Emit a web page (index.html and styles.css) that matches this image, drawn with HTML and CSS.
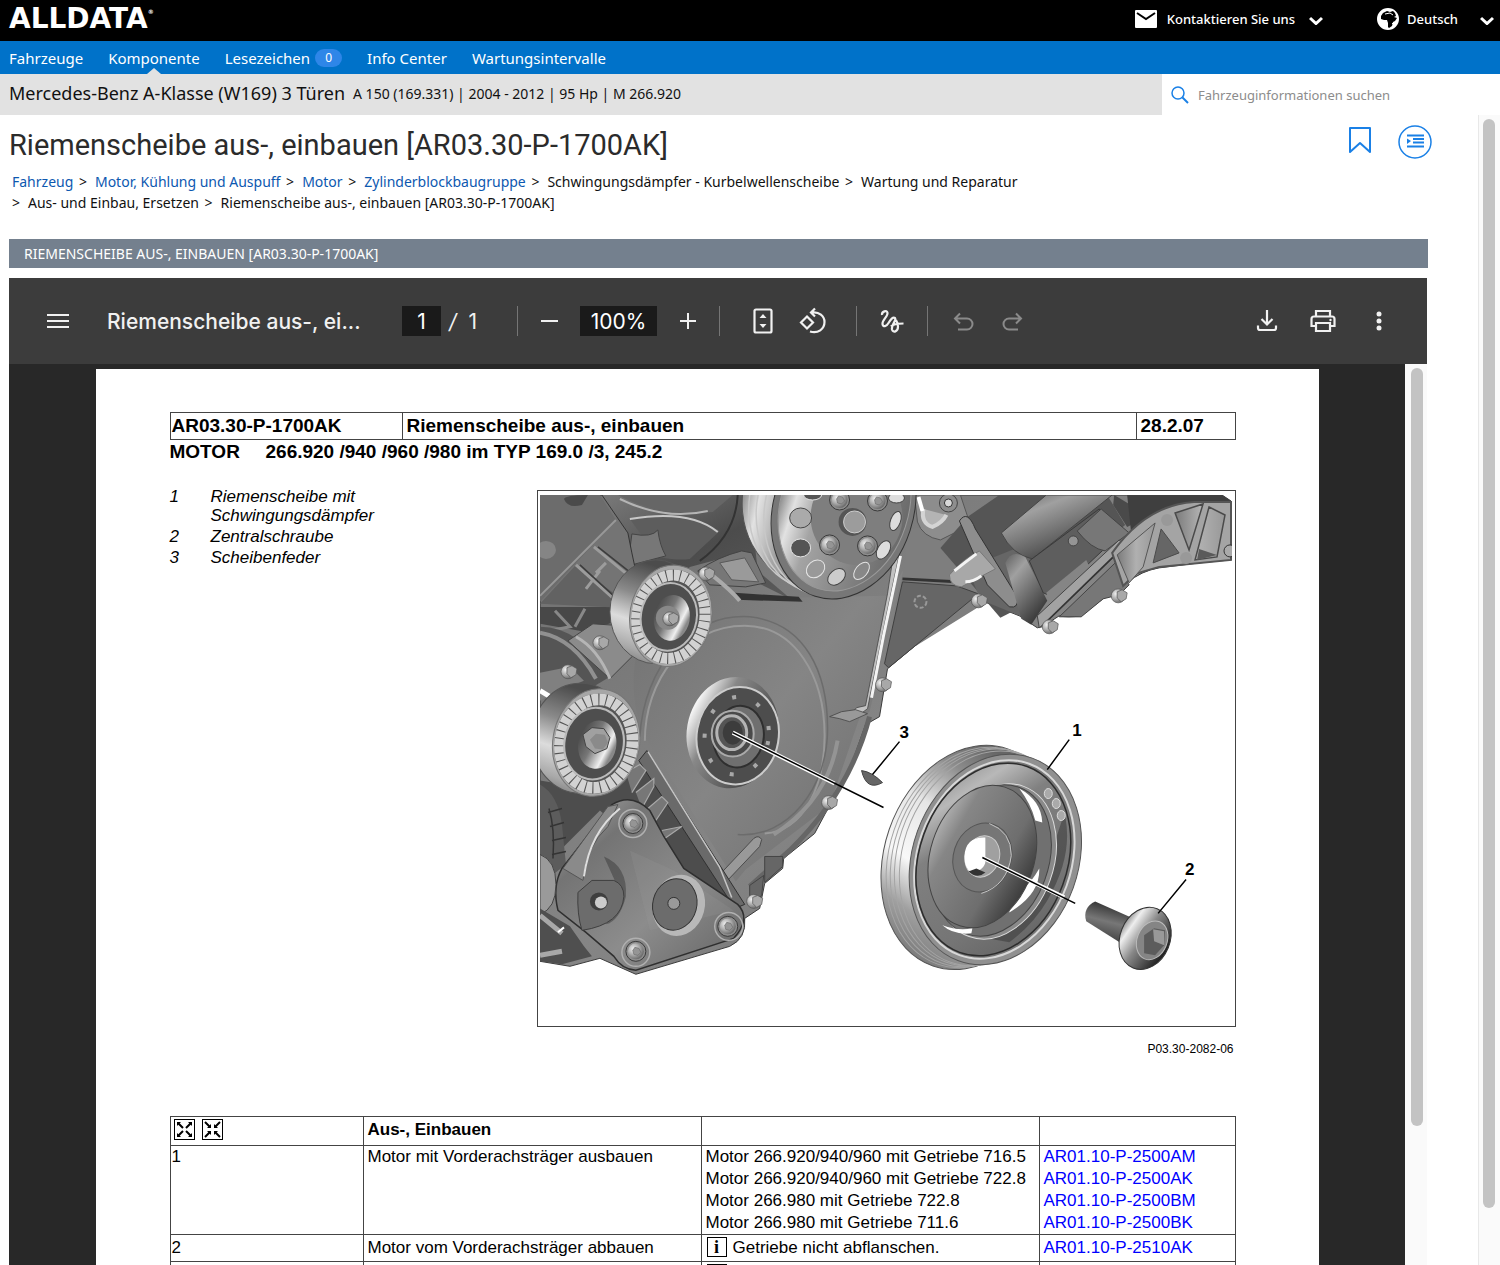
FILE: index.html
```
<!DOCTYPE html>
<html lang="de">
<head>
<meta charset="utf-8">
<title>ALLDATA - Riemenscheibe aus-, einbauen</title>
<link rel="stylesheet" href="styles.css">
</head>

<body>

<header class="topbar">
	<a class="logo" href="#">ALLDATA<sup>&reg;</sup></a>
	<button class="top-btn contact" type="button">
		<svg width="22" height="18" viewBox="0 0 22 18"><rect x="0" y="0" width="22" height="18" rx="1" fill="#fff"/><path d="M2 3l9 6 9-6" fill="none" stroke="#000" stroke-width="2"/></svg>
		Kontaktieren Sie uns
		<svg class="chev" width="14" height="9" viewBox="0 0 14 9"><path d="M1 2q6 5.500 6 5.500t6-5.500" fill="none" stroke="#fff" stroke-width="3"/></svg>
	</button>
	<button class="top-btn lang" type="button">
		<svg width="22" height="22" viewBox="0 0 22 22"><circle cx="11" cy="11" r="10" fill="#fff" stroke="#fff" stroke-width="2"/><path d="M4 8l2-3 4-2 3 1 3-1 2 2 1 3-2 1 3 1-2 3-2 1-1 4-3 2-1-1 0-4-1-3-3 0-3-1z" fill="#000"/><path d="M8 6l5-1 3 2M15 16l1-1" stroke="#fff" fill="none"/></svg>
		Deutsch
		<svg class="chev" width="14" height="9" viewBox="0 0 14 9"><path d="M1 2q6 5.500 6 5.500t6-5.500" fill="none" stroke="#fff" stroke-width="3"/></svg>
	</button>
</header>

<nav class="mainnav">
	<a href="#">Fahrzeuge</a>
	<a href="#" class="active">Komponente</a>
	<a href="#">Lesezeichen<span class="badge">0</span></a>
	<a href="#">Info Center</a>
	<a href="#">Wartungsintervalle</a>
</nav>

<div class="vehicle">
	<div class="vehicle-info">
		<strong>Mercedes-Benz A-Klasse (W169) 3 Türen</strong>
		<span>A 150 (169.331) | 2004 - 2012 | 95 Hp | M 266.920</span>
	</div>
	<form class="search">
		<label for="q"><svg width="18" height="18" viewBox="0 0 18 18"><circle cx="7" cy="7" r="6" fill="none" stroke="#1a80e6" stroke-width="1.500"/><path d="M11.500 11.500l5.500 5.500" stroke="#1a80e6" stroke-width="2"/></svg></label>
		<input id="q" type="text" placeholder="Fahrzeuginformationen suchen">
	</form>
</div>

<div class="content">
<main>
	<div class="title-row">
		<h1>Riemenscheibe aus-, einbauen [AR03.30-P-1700AK]</h1>
		<button class="icon-btn" type="button" aria-label="Lesezeichen">
			<svg width="24" height="32" viewBox="0 0 24 32"><path d="M2 2h20v24l-10-9-10 9z" fill="none" stroke="#1a80e6" stroke-width="2" stroke-linejoin="round"/></svg>
		</button>
		<button class="icon-btn" type="button" aria-label="Inhalt">
			<svg width="34" height="34" viewBox="0 0 34 34"><circle cx="17" cy="17" r="16" fill="none" stroke="#1a80e6" stroke-width="1.500"/><path d="M9 10.500h17M15 14h11M15 17.500h11M9 21.500h17" stroke="#1a80e6" stroke-width="2"/><path d="M9 13.500l4 2.500-4 3z" fill="#1a80e6"/></svg>
		</button>
	</div>

	<ol class="crumbs">
		<li><a href="#">Fahrzeug</a></li>
		<li><a href="#">Motor, Kühlung und Auspuff</a></li>
		<li><a href="#">Motor</a></li>
		<li><a href="#">Zylinderblockbaugruppe</a></li>
		<li>Schwingungsdämpfer - Kurbelwellenscheibe</li>
		<li>Wartung und Reparatur</li>
		<li>Aus- und Einbau, Ersetzen</li>
		<li>Riemenscheibe aus-, einbauen [AR03.30-P-1700AK]</li>
	</ol>

	<h2>RIEMENSCHEIBE AUS-, EINBAUEN [AR03.30-P-1700AK]</h2>

	<section class="viewer">
		<div class="toolbar">
			<button class="tool" type="button" aria-label="Menü"><svg width="28" height="28" viewBox="0 0 28 28"><path d="M3 8h22M3 14h22M3 20h22" stroke="#f1f1f1" stroke-width="2"/></svg></button>
			<span class="doc-name">Riemenscheibe aus-, ei...</span>
			<input class="page-no" type="text" value="1" aria-label="Seite">
			<span class="page-total"><i>/</i>1</span>
			<span class="divider"></span>
			<div class="zoom">
				<button class="tool" type="button" aria-label="Verkleinern"><svg width="28" height="28" viewBox="0 0 28 28"><path d="M6 14h17" stroke="#f1f1f1" stroke-width="2"/></svg></button>
				<input type="text" value="100%" aria-label="Zoom">
				<button class="tool" type="button" aria-label="Vergrößern"><svg width="28" height="28" viewBox="0 0 28 28"><path d="M6 14h16M14 6v16" stroke="#f1f1f1" stroke-width="2"/></svg></button>
			</div>
			<span class="divider"></span>
			<div class="view">
				<button class="tool" type="button" aria-label="An Seite anpassen"><svg width="28" height="28" viewBox="0 0 28 28"><rect x="5.500" y="2.500" width="17" height="23" rx="1.500" fill="none" stroke="#f1f1f1" stroke-width="2.200"/><path d="M10.500 11l3.500-4 3.500 4zM10.500 17l3.500 4 3.500-4z" fill="#f1f1f1"/></svg></button>
				<button class="tool" type="button" aria-label="Drehen"><svg width="28" height="28" viewBox="0 0 28 28"><path d="M8 9.500l6 6-6 6-6-6zM13 5.500c7-1 12.500 3.500 12.500 9.500 0 7-6.500 12-14.500 9.500M16 1.500l-4 4 4 4" fill="none" stroke="#f1f1f1" stroke-width="2.200"/></svg></button>
			</div>
			<span class="divider"></span>
			<button class="tool ink" type="button" aria-label="Zeichnen"><svg width="28" height="28" viewBox="0 0 28 28"><path d="M4 8C3.500 4.500 9 2.500 9.500 6 10 9.500 4 13 4.500 17c.5 3.500 4 2.500 6-1s4.500-6.500 6.500-5c2 2-4 7-3 11.500 1 3.500 6 2.500 6-3 0-2.500-.8-4.500-2-6.500M13 19.500C15 16.800 19 16.500 25.500 16.500" fill="none" stroke="#f1f1f1" stroke-width="2.200"/></svg></button>
			<span class="divider"></span>
			<div class="history">
				<button class="tool" type="button" aria-label="Rückgängig" disabled><svg width="28" height="28" viewBox="0 0 28 28"><path d="M11 6.500l-5 5 5 5M6 11.500h12a5 5 0 0 1 0 11H9" fill="none" stroke="#8a8a8a" stroke-width="2"/></svg></button>
				<button class="tool" type="button" aria-label="Wiederholen" disabled><svg width="28" height="28" viewBox="0 0 28 28"><path d="M17 6.500l5 5-5 5M22 11.500H10a5 5 0 0 0 0 11H19" fill="none" stroke="#8a8a8a" stroke-width="2"/></svg></button>
			</div>
			<div class="actions">
				<button class="tool" type="button" aria-label="Herunterladen"><svg width="28" height="28" viewBox="0 0 28 28"><path d="M14 3v14M8.500 12l5.500 5.500 5.500-5.500M5 18.500V21q0 2 2 2h14q2 0 2-2v-2.500" fill="none" stroke="#f1f1f1" stroke-width="2.200"/></svg></button>
				<button class="tool" type="button" aria-label="Drucken"><svg width="28" height="28" viewBox="0 0 28 28"><path d="M7 9V4h14v5M7 19H2.500v-7q0-2.500 2.500-2.500h18q2.500 0 2.500 2.500v7H21M7 16h14v8H7z" fill="none" stroke="#f1f1f1" stroke-width="2.200"/><circle cx="21.500" cy="13" r="1.200" fill="#f1f1f1"/></svg></button>
				<button class="tool" type="button" aria-label="Mehr"><svg width="28" height="28" viewBox="0 0 28 28"><g fill="#f1f1f1"><circle cx="14" cy="7" r="2.500"/><circle cx="14" cy="14" r="2.500"/><circle cx="14" cy="21" r="2.500"/></g></svg></button>
			</div>
		</div>

		<div class="pages">
			<article class="paper">
				<table class="doc-head">
					<tr><td>AR03.30-P-1700AK</td><td>Riemenscheibe aus-, einbauen</td><td>28.2.07</td></tr>
				</table>
				<p class="motor"><b>MOTOR</b><b>266.920 /940 /960 /980 im TYP 169.0 /3, 245.2</b></p>

				<div class="figure-row">
					<dl class="legend">
						<dt>1</dt><dd>Riemenscheibe mit Schwingungsdämpfer</dd>
						<dt>2</dt><dd>Zentralschraube</dd>
						<dt>3</dt><dd>Scheibenfeder</dd>
					</dl>
					<figure>
<svg class="drawing" viewBox="538 490 698 536">
	<defs>
		<linearGradient id="plate" x1="0" y1="0" x2="1" y2="1"><stop offset="0" stop-color="#6f6f6f"/><stop offset=".5" stop-color="#858585"/><stop offset="1" stop-color="#6a6a6a"/></linearGradient>
		<linearGradient id="dark" x1="0" y1="0" x2="1" y2="1"><stop offset="0" stop-color="#7a7a7a"/><stop offset=".5" stop-color="#4c4c4c"/><stop offset="1" stop-color="#5c5c5c"/></linearGradient>
		<linearGradient id="rim" x1="0" y1="0" x2="1" y2="0"><stop offset="0" stop-color="#8c8c8c"/><stop offset=".12" stop-color="#e2e2e2"/><stop offset=".3" stop-color="#a4a4a4"/><stop offset="1" stop-color="#6a6a6a"/></linearGradient>
		<linearGradient id="drum" x1=".3" y1="0" x2="0" y2="1"><stop offset="0" stop-color="#4c4c4c"/><stop offset=".3" stop-color="#8a8a8a"/><stop offset=".55" stop-color="#dcdcdc"/><stop offset=".8" stop-color="#a8a8a8"/><stop offset="1" stop-color="#6a6a6a"/></linearGradient>
		<linearGradient id="belt" x1=".3" y1="0" x2=".1" y2="1"><stop offset="0" stop-color="#666"/><stop offset=".15" stop-color="#8c8c8c"/><stop offset=".35" stop-color="#e6e6e6"/><stop offset=".6" stop-color="#f8f8f8"/><stop offset=".78" stop-color="#a0a0a0"/><stop offset="1" stop-color="#6c6c6c"/></linearGradient>
		<linearGradient id="face" x1="0" y1="0" x2="1" y2="1"><stop offset="0" stop-color="#7a7a7a"/><stop offset=".2" stop-color="#b8b8b8"/><stop offset=".35" stop-color="#808080"/><stop offset=".7" stop-color="#757575"/><stop offset="1" stop-color="#5c5c5c"/></linearGradient>
		<linearGradient id="dish" x1="0" y1=".3" x2="1" y2=".6"><stop offset="0" stop-color="#b4b4b4"/><stop offset=".2" stop-color="#868686"/><stop offset=".7" stop-color="#6e6e6e"/><stop offset="1" stop-color="#3c3c3c"/></linearGradient>
		<linearGradient id="tube" x1="0" y1="0" x2=".7" y2="1"><stop offset="0" stop-color="#606060"/><stop offset=".3" stop-color="#a0a0a0"/><stop offset=".65" stop-color="#6a6a6a"/><stop offset="1" stop-color="#333"/></linearGradient>
		<linearGradient id="shaft" x1=".3" y1="0" x2="0" y2="1"><stop offset="0" stop-color="#333"/><stop offset=".4" stop-color="#777"/><stop offset="1" stop-color="#2c2c2c"/></linearGradient>
		<linearGradient id="arm" x1="0" y1="0" x2="1" y2="0"><stop offset="0" stop-color="#7b7b7b"/><stop offset=".5" stop-color="#b0b0b0"/><stop offset="1" stop-color="#989898"/></linearGradient>
		<linearGradient id="hubring" x1="0" y1="0" x2="1" y2=".4"><stop offset="0" stop-color="#9a9a9a"/><stop offset=".15" stop-color="#f4f4f4"/><stop offset=".4" stop-color="#888"/><stop offset="1" stop-color="#444"/></linearGradient>
		<linearGradient id="cup" x1="0" y1="0" x2="1" y2=".4"><stop offset="0" stop-color="#3c3c3c"/><stop offset=".5" stop-color="#777"/><stop offset=".85" stop-color="#f0f0f0"/><stop offset="1" stop-color="#888"/></linearGradient>
		<linearGradient id="tri" x1="0" y1="0" x2="1" y2="1"><stop offset="0" stop-color="#b4b4b4"/><stop offset=".25" stop-color="#747474"/><stop offset=".6" stop-color="#8c8c8c"/><stop offset="1" stop-color="#636363"/></linearGradient>
		<radialGradient id="bolt" cx=".35" cy=".35" r=".7"><stop offset="0" stop-color="#f2f2f2"/><stop offset=".5" stop-color="#b0b0b0"/><stop offset="1" stop-color="#666"/></radialGradient>
		<linearGradient id="head" x1="0" y1=".2" x2="1" y2=".5"><stop offset="0" stop-color="#777"/><stop offset=".2" stop-color="#eee"/><stop offset=".5" stop-color="#888"/><stop offset="1" stop-color="#222"/></linearGradient>
		<clipPath id="frame"><rect x="540" y="494" width="693" height="529"/></clipPath>
		<g id="screw"><circle r="10" fill="#8d8d8d" stroke="#3a3a3a"/><circle r="8" fill="url(#bolt)"/><path d="M-1-4l4 1 2 4-3 3-4-1-1-4z" fill="#959595" stroke="#666" stroke-width=".6"/></g>
		<g id="hexbolt"><circle r="7" fill="url(#bolt)" stroke="#555" stroke-width=".7"/><path d="M-1-4l5-2 5 3-1 6-5 3-4-4z" fill="#a8a8a8" stroke="#555" stroke-width=".7"/></g>
	</defs>
	<g clip-path="url(#frame)">
		<!-- engine block -->
		<path d="M540 494H1223l9 6v59l-32 3-40 5q-18 3-32 15l-6 11-17 4-23 18q-14 2-22 0l-17 11-5 1-18-12-35-14-20 10-10 8h-8l-59 49-8 48-14 8-16 45-12 20-8 16-15 28-31 25-1 10-18 15-5 25-15 10q2 20-15 28l-94 28-36-16-30 8L540 961z" fill="url(#plate)" stroke="#3a3a3a"/>
		<!-- upper left housing -->
		<path d="M600 494h150l8 76 40 34H690l-50-20z" fill="url(#dark)"/>
		<path d="M618 494q40 22 95 17l20-17z" fill="#666"/><path d="M620 498q45 22 88 12" fill="none" stroke="#b5b5b5" stroke-width="2"/>
		<path d="M630 518q60-8 90 12l-30 28q-12 2-30-2l-20-24z" fill="#5d5d5d"/>
		<path d="M630 518q60-10 88 13" fill="none" stroke="#c8c8c8" stroke-width="2"/>
		<path d="M632 533q20 4 26-4 2 16 8 26l-38 10z" fill="#777" stroke="#444"/>
		<path d="M738 494q-2 40-38 66" fill="none" stroke="#333" stroke-width="2"/>
		<!-- left bracket -->
		<path d="M540 494h62l26 38 4 20 6 28-18 27h-80z" fill="#747474" stroke="#343434"/>
		<path d="M540 494h60l16 25-76 82z" fill="#6c6c6c"/>
		<path d="M616 519l-76 76" stroke="#989898" stroke-width="2"/>
		<path d="M540 603l35-38 40 28 4 14z" fill="#626262"/>
		<path d="M594 546l34 28M576 564l38 34M600 570l-14 18M606 562l-10 10" stroke="#9c9c9c" stroke-width="3"/>
		<path d="M598 546l33 26M580 564l36 33" stroke="#3d3d3d" stroke-width="1.500"/>
		<path d="M564 498q2-4 24-4l-6 10q-14 4-18-6z" fill="#4a4a4a"/><ellipse cx="546" cy="549" rx="10" ry="9" fill="#858585"/>
		<path d="M540 607h85l-10 14-30 10-45-8z" fill="#484848"/>
		<path d="M555 610l15 16-20 4M585 608l-10 18" stroke="#888" stroke-width="3" fill="none"/>
		<path d="M540 626q40 0 70 50l-20 12-50-14z" fill="#555"/><path d="M540 632q34 6 56 46" fill="none" stroke="#909090" stroke-width="4"/>
		<path d="M540 672l30-6 14 14-34 14-10 6z" fill="#808080"/><path d="M540 690l10 6" stroke="#fff" stroke-width="5"/>
		<path d="M568 640l25-17 30 2 15 25-28 28z" fill="#8b8b8b" stroke="#444"/>
		<path d="M576 636q22 12 34 42" fill="none" stroke="#b5b5b5" stroke-width="3"/>
		<use href="#hexbolt" x="600" y="642"/><use href="#hexbolt" x="568" y="671"/>
		<!-- dark zone under the lower idler -->
		<path d="M540 780l60 10 50-30 92 150-62-30-80-70-40 40-20-10z" fill="#4d4d4d"/>
		<path d="M540 784q18 10 22 40l4 40-26 20z" fill="#5c5c5c"/><path d="M548 812l14-4M550 826l14-4M552 840l14-3M552 854l14-3M549 808q6 20 4 50" fill="none" stroke="#343434" stroke-width="1.500"/>
		<!-- timing cover -->
		<path d="M690 566l56-15 14 32 28 14 100-2 16-26-34 142-10 6-30 88-84 64-10 12-94-150q-20-60 8-116z" fill="url(#plate)"/>
		<path d="M698 570q20-14 44-20l10 2 14 30-20 4-36-2z" fill="#777" stroke="#444"/><path d="M720 562l25-5 14 24-27-2z" fill="#9a9a9a" stroke="#5a5a5a"/>
		<path d="M735 592l64 4 4 5-66-2z" fill="#333"/><path d="M712 574q20 16 28 26" stroke="#aaa" stroke-width="4" fill="none"/>
		<use href="#hexbolt" x="706" y="573"/>
		<path d="M645 740c0-60 40-115 100-115 50 0 80 50 80 110 0 50-20 95-60 98" fill="none" stroke="#999" stroke-width="2"/>
		<path d="M640 736c4-70 50-124 110-120 56 6 78 56 78 112 0 60-40 110-90 106" fill="none" stroke="#6c6c6c" stroke-width="1.500"/>
		<path d="M838 740q-10 60-64 94" fill="none" stroke="#949494" stroke-width="4"/>
		<path d="M870 716q-20 76-80 134l-40 36" fill="none" stroke="#666" stroke-width="5"/>
		<path d="M722 872l32-34q5-4 8 1l-2 7-36 38z" fill="#999" stroke="#4b4b4b"/>
		<path d="M647 750l98 154-10 4-96-148z" fill="#6a6a6a" stroke="#303030"/><path d="M648 751l72 116 12 30" fill="none" stroke="#c4c4c4" stroke-width="1.500"/>
		<path d="M626 772l14-8 6 6-14 22M636 792l18-14 0 8-12 22M648 808l14-12 6 6-12 18M662 830l20-4-20 14" fill="#777" stroke="#a8a8a8" stroke-width="1.200"/>
		<!-- bright edge rib -->
		<path d="M906 524l-19 90-19 94-8 6-8-1 5-6 9-2 22-112 10-66z" fill="#c2c2c2" stroke="#444" stroke-width=".8"/><path d="M901 555l-17 80-12 62" stroke="#f4f4f4" stroke-width="3" fill="none"/>
		<path d="M830 716l12-5 14-2 12 4-18 8-10-3z" fill="#999" stroke="#444" stroke-width=".8"/>
		<!-- right upper housings -->
		<path d="M906 530l60-16 30 66-10 22-100 62 20-104z" fill="#7e7e7e"/>
		<path d="M903 581l54 4 22 8-90 74-4-4z" fill="#666" stroke="#3f3f3f"/><path d="M903 578l54 3" stroke="#333" stroke-width="3"/>
		<circle cx="921" cy="601" r="6" fill="none" stroke="#999" stroke-width="2" stroke-dasharray="4 2"/>
		<path d="M915 494h46l10 30-30 15q-18-3-23-18z" fill="#8d8d8d" stroke="#555"/><path d="M924 508q-3 14 9 18 10-4 14-12" fill="#b4b4b4" stroke="#d4d4d4" stroke-width="4"/><path d="M919 496l4 14" stroke="#fff" stroke-width="4"/>
		<circle cx="949" cy="502" r="9" fill="#8e8e8e" stroke="#444"/><circle cx="949" cy="502" r="4" fill="#d8d8d8" stroke="#333"/>
		<path d="M968 516l32-22h108l18 30-90 75-35 18-60-70z" fill="#555"/>
		<path d="M985 560l50-20 30 30-42 46-42-17-8-20z" fill="#666"/>
		<path d="M960 520q8-12 16 8l42 68q2 12-8 10l-22-22z" fill="#8d8d8d" stroke="#333"/>
		<path d="M950 574q14-16 30-24l16 18-34 18q-12-1-12-12z" fill="#a8a8a8" stroke="#777"/><path d="M955 570q10-8 22-17M966 581q8 0 16-6" fill="none" stroke="#f4f4f4" stroke-width="3"/>
		<path d="M1002 532l45-38h66l-80 64q-20-4-31-26z" fill="url(#tube)" stroke="#444"/>
		<path d="M1006 562q6-14 20-6l22 44-16 24-10-6z" fill="url(#tube)"/>
		<path d="M1030 560l70-52 20 26-66 62-10-4z" fill="#5e5e5e" stroke="#3a3a3a"/>
		<path d="M1047 592l40-33 4 8-40 36z" fill="#858585"/>
		<path d="M1078 530l24-22 28 24-24 18q-14-2-28-20z" fill="#777" stroke="#444"/><circle cx="1074" cy="540" r="5" fill="#949494" stroke="#444"/>
		<path d="M1038 615l82-76 6 6-72 70-14 12z" fill="#a2a2a2" stroke="#444"/>
		<path d="M1060 616l56-54 14 22-10 10-16 4-22 18z" fill="#777" stroke="#444"/><path d="M1044 624l70-68" stroke="#333" stroke-width="1.500"/>
		<path d="M1115 494l20 12 5 14-12 6-14-22z" fill="#4a4a4a"/><path d="M1131 502l8 5" stroke="#fff" stroke-width="5" stroke-dasharray="2 1"/>
		<!-- arm -->
		<path d="M1128 494h95l9 6v12l-70 0-30 20z" fill="#3f3f3f"/>
		<path d="M1113 552q34-48 82-51l37 0v58l-72 7-24 7-12 12z" fill="#a4a4a4" stroke="#555" stroke-width="2"/>
		<path d="M1118 554l38-32-12 44-14 16z" fill="url(#arm)" stroke="#555"/>
		<path d="M1176 512l28-9-14 46zM1210 506l16 8-8 42-22 3z" fill="url(#arm)" stroke="#4a4a4a" stroke-width="1.500"/>
		<path d="M1162 528l18 24-26 10z" fill="#666" stroke="#4a4a4a"/><path d="M1200 548l18 6-20 5z" fill="#5a5a5a"/>
		<circle cx="1168" cy="519" r="6" fill="#999"/><circle cx="1187" cy="557" r="6" fill="#999"/><circle cx="1231" cy="550" r="6" fill="#aaa" stroke="#333"/>
		<use href="#hexbolt" x="1119" y="595"/><use href="#hexbolt" x="1050" y="626"/><use href="#hexbolt" x="979" y="600"/><use href="#hexbolt" x="883" y="684"/><use href="#hexbolt" x="829" y="802"/>
		<path d="M765 856l18 0 0 10-18 16zM750 885l14-10-2 20-12 10z" fill="#666" stroke="#444"/><use href="#hexbolt" x="754" y="901"/>
		<!-- top pulley -->
		<ellipse cx="820" cy="498" rx="77" ry="86" transform="rotate(14 820 498)" fill="url(#rim)" stroke="#555"/>
		<g fill="none" stroke="#c8c8c8" stroke-width="1.500"><ellipse cx="826" cy="502" rx="76" ry="88" transform="rotate(16 826 502)"/><ellipse cx="832" cy="504" rx="74" ry="90" transform="rotate(16 832 504)"/><ellipse cx="838" cy="506" rx="72" ry="91" transform="rotate(16 838 506)"/></g>
		<ellipse cx="844" cy="508" rx="70" ry="92" transform="rotate(18 844 508)" fill="#777" stroke="#333"/>
		<ellipse cx="845" cy="506" rx="64" ry="86" transform="rotate(18 845 506)" fill="url(#rim)" stroke="#999"/>
		<ellipse cx="857" cy="516" rx="46" ry="48" fill="#7e7e7e"/>
		<g fill="#555" stroke="#e4e4e4"><ellipse cx="801" cy="517" rx="11" ry="10" fill="#aaa" stroke="#444"/><ellipse cx="801" cy="547" rx="10" ry="9"/><ellipse cx="816" cy="568" rx="10" ry="8" transform="rotate(-40 816 568)" fill="#999"/><ellipse cx="837" cy="576" rx="10" ry="7" transform="rotate(-40 837 576)" fill="#ccc" stroke="#444"/><ellipse cx="862" cy="570" rx="10" ry="6" transform="rotate(-50 862 570)" fill="#888"/><ellipse cx="884" cy="549" rx="10" ry="6" transform="rotate(-60 884 549)" fill="#ddd" stroke="#444"/><ellipse cx="896" cy="520" rx="10" ry="5" transform="rotate(-70 896 520)" fill="#ddd" stroke="#444"/><ellipse cx="813" cy="494" rx="9" ry="5"/><ellipse cx="897" cy="497" rx="8" ry="5" fill="#ddd" stroke="#444"/></g>
		<circle cx="853" cy="521" r="14" fill="#555"/><circle cx="855" cy="521" r="11" fill="#9c9c9c" stroke="#ccc"/>
		<use href="#screw" x="830" y="544"/><use href="#screw" x="868" y="545"/><use href="#screw" x="840" y="499"/><use href="#screw" x="878" y="500"/>
		<!-- crank hub -->
		<ellipse cx="733" cy="732" rx="46" ry="56" transform="rotate(10 733 732)" fill="url(#hubring)"/>
		<ellipse cx="738" cy="735" rx="41" ry="49" transform="rotate(10 738 735)" fill="#4d4d4d" stroke="#ccc" stroke-width="2"/>
		<ellipse cx="737" cy="735" rx="32" ry="39" transform="rotate(10 737 735)" fill="none" stroke="#a8a8a8" stroke-width="4" stroke-dasharray="4 22"/>
		<ellipse cx="739" cy="736" rx="25" ry="31" transform="rotate(10 739 736)" fill="#6f6f6f" stroke="#2f2f2f" stroke-width="2"/>
		<ellipse cx="733" cy="733" rx="21" ry="23" fill="#4a4a4a" stroke="#aaa" stroke-width="2"/>
		<ellipse cx="732" cy="732" rx="15" ry="17" fill="#555" stroke="#b4b4b4" stroke-width="3"/>
		<ellipse cx="733" cy="732" rx="10" ry="12" fill="#3c3c3c"/>
		<!-- idlers -->
		<g id="idler">
			<ellipse cx="656" cy="611" rx="46" ry="52" fill="url(#drum)" stroke="#555"/>
			<ellipse cx="671" cy="615" rx="41" ry="51" transform="rotate(10 671 615)" fill="#a6a6a6" stroke="#777"/>
			<ellipse cx="671" cy="616" rx="34" ry="42" transform="rotate(10 671 616)" fill="#555" stroke="#555" stroke-width="11"/>
			<ellipse cx="671" cy="616" rx="34" ry="42" transform="rotate(10 671 616)" fill="none" stroke="#d2d2d2" stroke-width="11" stroke-dasharray="6 1"/>
			<ellipse cx="669" cy="616" rx="28" ry="34" transform="rotate(10 669 616)" fill="#4e4e4e" stroke="#bbb" stroke-width="2"/>
			<ellipse cx="672" cy="617" rx="18" ry="23" transform="rotate(10 672 617)" fill="url(#cup)"/>
		</g>
		<circle cx="668" cy="617" r="12" fill="#888"/><use href="#hexbolt" x="670" y="618"/>
		<g transform="translate(-115 90) scale(1.060)"><use href="#idler"/></g>
		<path d="M583 734l9-7 12 1 6 9-3 11-12 5-9-7z" fill="#a0a0a0" stroke="#444"/><path d="M590 739l6-6 9 1 3 8-5 7-8-1z" fill="#8a8a8a"/>
		<!-- lower bracket -->
		<path d="M612 804q20-12 38 6l14 26 20 32 54 36q14 14-4 34l-98 32q-14-1-22-14l-28-24-28-22q-6-24 4-42z" fill="url(#tri)" stroke="#2f2f2f" stroke-width="1.500"/>
		<path d="M608 806l10-2-10 22q-22 20-25 54l-20-12z" fill="#8a8a8a" stroke="#555"/><path d="M620 808q-30 24-36 68" fill="none" stroke="#ddd" stroke-width="2"/>
		<path d="M604 856q24 10 22 40-6 24-20 28 16-30 8-46z" fill="#3a3a3a" opacity=".5"/><path d="M630 850l20 80 84-20-60-40z" fill="#999" opacity=".2"/>
		<path d="M578 892l14-12h22q10 4 10 16-2 28-42 34-5-16-4-38z" fill="#6c6c6c" stroke="#3f3f3f"/><circle cx="599" cy="901" r="9" fill="#3f3f3f"/><circle cx="601" cy="902" r="6" fill="#ccc"/>
		<ellipse cx="679" cy="905" rx="26" ry="31" transform="rotate(15 679 905)" fill="#b8b8b8"/><ellipse cx="675" cy="904" rx="22" ry="26" transform="rotate(15 675 904)" fill="#6c6c6c" stroke="#333"/><circle cx="674" cy="903" r="6" fill="#999" stroke="#333"/>
		<g fill="none" stroke="#b0b0b0" stroke-width="1.500"><circle cx="633" cy="823" r="14"/><circle cx="729" cy="926" r="14"/><circle cx="636" cy="952" r="14"/></g>
		<use href="#screw" x="633" y="823"/><use href="#screw" x="728" y="926"/><use href="#screw" x="636" y="951"/>
		<path d="M540 854q16 6 16 30t-16 30z" fill="#9a9a9a" stroke="#444"/>
		<path d="M540 908l30 18 14 20 8 10-30 8-22-3z" fill="#4f4f4f"/><path d="M540 955l22-4M540 915l22 18" stroke="#a8a8a8" stroke-width="5"/><path d="M558 932l6-5" stroke="#fff" stroke-width="2"/>
	</g>

	<!-- key -->
	<path d="M862 770q10 1 21 12-16 9-21-12z" fill="#666" stroke="#444"/>

	<!-- damper pulley (1) -->
	<ellipse cx="971" cy="857" rx="86" ry="115" transform="rotate(19 971 857)" fill="url(#belt)" stroke="#555"/>
	<g fill="none" stroke="#a4a4a4"><ellipse cx="975" cy="857" rx="85" ry="113" transform="rotate(19 975 857)"/><ellipse cx="979" cy="857" rx="85" ry="112" transform="rotate(19 979 857)"/><ellipse cx="983" cy="857" rx="85" ry="111" transform="rotate(19 983 857)"/><ellipse cx="987" cy="858" rx="84" ry="110" transform="rotate(19 987 858)"/></g>
	<ellipse cx="996" cy="859" rx="83" ry="108" transform="rotate(20 996 859)" fill="#909090" stroke="#555"/>
	<ellipse cx="995" cy="859" rx="77" ry="102" transform="rotate(20 995 859)" fill="#777" stroke="#d8d8d8" stroke-width="2"/>
	<ellipse cx="994" cy="859" rx="74" ry="99" transform="rotate(20 994 859)" fill="url(#face)" stroke="#2d2d2d" stroke-width="1.500"/>
	<path d="M1066 816q8 40-18 84-14 24-38 42l-22-4 56-62 20-60z" fill="#3d3d3d" opacity=".6"/>
	<ellipse cx="997" cy="861" rx="57" ry="80" transform="rotate(20 997 861)" fill="#8a8a8a" stroke="#ddd"/>
	<ellipse cx="993" cy="860" rx="56" ry="78" transform="rotate(20 993 860)" fill="#707070" stroke="#444"/>
	<path d="M1020 788q22 12 23 34l-7-2q-4-16-16-32zM1040 868q1 26-30 44 1-14 14-24 8-6 16-20zM943 925q16 6 30 3l-1 5q-18 2-29-8z" fill="#fff"/>
	<ellipse cx="983" cy="856" rx="52" ry="73" transform="rotate(18 983 856)" fill="url(#dish)" stroke="#444"/>
	<ellipse cx="983" cy="857" rx="29" ry="35" transform="rotate(18 983 857)" fill="#767676" stroke="#555"/><path d="M990 823q22 8 22 32-4 30-30 38" fill="none" stroke="#c4c4c4"/>
	<ellipse cx="983" cy="856" rx="17" ry="21" transform="rotate(18 983 856)" fill="#a0a0a0" stroke="#ccc"/>
	<path d="M986 837q-20-1-21 19 0 12 7 16 16-2 14-16z" fill="#fff"/><path d="M969 871q9 8 17 1l-9-4z" fill="#333"/>
	<g fill="#aaa" stroke="#ddd"><ellipse cx="1049" cy="793" rx="4" ry="5"/><ellipse cx="1057" cy="803" rx="4" ry="5"/><ellipse cx="1062" cy="815" rx="4" ry="5"/></g>

	<!-- centre bolt (2) -->
	<path d="M1087 921q-4-14 9-20l40 18-14 24z" fill="url(#shaft)"/>
	<ellipse cx="1146" cy="938" rx="25" ry="32" transform="rotate(22 1146 938)" fill="url(#head)" stroke="#333"/>
	<ellipse cx="1153" cy="940" rx="15" ry="20" transform="rotate(22 1153 940)" fill="#858585" stroke="#bbb"/>
	<path d="M1145 935l10-7 11 2-1 15-9 10-11-2z" fill="#5c5c5c"/><path d="M1154 929l11 2v14l-10-4z" fill="#999"/>

	<!-- leader lines -->
	<path d="M733 732l102 51M983 857l82 40" stroke="#fff" stroke-width="4"/>
	<path d="M733 732l151 75M983 857l93 46M900 741l-27 33M1070 739l-22 30M1187 879l-28 34" stroke="#000" stroke-width="1.500" fill="none"/>
	<g class="callout"><text x="900" y="737">3</text><text x="1073" y="735">1</text><text x="1186" y="875">2</text></g>
</svg>
						<figcaption>P03.30-2082-06</figcaption>
					</figure>
				</div>

				<table class="steps">
					<colgroup><col class="c1"><col class="c2"><col class="c2"><col class="c4"></colgroup>
					<tr class="head">
						<th>
							<svg width="21" height="21" viewBox="0 0 21 21"><rect x=".5" y=".5" width="20" height="20" fill="#fff" stroke="#000"/><path d="M9 9L4 4M12 9l5-5M9 12l-5 5M12 12l5 5" stroke="#000" stroke-width="2"/><path d="M3 3h4L3 7zM18 3v4l-4-4zM3 18v-4l4 4zM18 18h-4l4-4z"/></svg>
							<svg width="21" height="21" viewBox="0 0 21 21"><rect x=".5" y=".5" width="20" height="20" fill="#fff" stroke="#000"/><path d="M3 3l5 5M18 3l-5 5M3 18l5-5M18 18l-5-5" stroke="#000" stroke-width="2"/><path d="M9 9H5l4-4zM12 9V5l4 4zM9 12v4l-4-4zM12 12h4l-4 4z"/></svg>
						</th>
						<th>Aus-, Einbauen</th><th></th><th></th>
					</tr>
					<tr><td rowspan="4">1</td><td rowspan="4">Motor mit Vorderachsträger ausbauen</td><td>Motor 266.920/940/960 mit Getriebe 716.5</td><td><a href="#">AR01.10-P-2500AM</a></td></tr>
					<tr class="sub"><td>Motor 266.920/940/960 mit Getriebe 722.8</td><td><a href="#">AR01.10-P-2500AK</a></td></tr>
					<tr class="sub"><td>Motor 266.980 mit Getriebe 722.8</td><td><a href="#">AR01.10-P-2500BM</a></td></tr>
					<tr class="sub"><td>Motor 266.980 mit Getriebe 711.6</td><td><a href="#">AR01.10-P-2500BK</a></td></tr>
					<tr class="note"><td>2</td><td>Motor vom Vorderachsträger abbauen</td><td><span class="info">i</span>Getriebe nicht abflanschen.</td><td><a href="#">AR01.10-P-2510AK</a></td></tr>
					<tr class="note"><td></td><td></td><td><span class="info"></span></td><td></td></tr>
				</table>
			</article>
			<div class="scroll"><div class="thumb pdf-thumb"></div></div>
		</div>
	</section>
</main>
<div class="scroll page-scroll"><div class="thumb"></div></div>
</div>

</body>
</html>
```
FILE: styles.css
```
*{
	margin:0;
	padding:0;
	box-sizing:border-box;
}
body{
	display:flex;
	flex-direction:column;
	height:100vh;
	overflow:hidden;
	background:#fff;
	color:#111;
	font-family:"Noto Sans","Open Sans",sans-serif;
	font-size:14px;
}
button{
	border:0;
	background:none;
	font:inherit;
	color:inherit;
}
input{
	border:0;
	font:inherit;
}
a{
	text-decoration:none;
}
svg{
	display:block;
}

/* top bar */
.topbar{
	display:flex;
	flex:none;
	height:41px;
	padding:0 6px 0 9px;
	background:#000;
	color:#fff;
}
.logo{
	margin-right:auto;
	font:bold 28px/38px "DejaVu Sans",sans-serif;
	color:#fff;
}
.logo sup{
	font-size:6px;
	line-height:6px;
	vertical-align:14px;
}
.top-btn{
	display:flex;
	align-items:center;
	height:38px;
	font-size:13px;
	font-weight:500;
}
.top-btn svg{
	margin-right:10px;
}
.top-btn .chev{
	margin:2px 0 0 14px;
}
.lang{
	margin-left:54px;
}
.lang svg{
	margin-right:8px;
}
.lang .chev{
	margin-left:22px;
}

/* main navigation */
.mainnav{
	display:flex;
	flex:none;
	gap:25px;
	height:33px;
	padding-left:9px;
	background:#0072c9;
}
.mainnav a{
	position:relative;
	display:flex;
	align-items:center;
	height:33px;
	color:#fff;
	font-size:15px;
}
.mainnav .active:after{
	content:"";
	position:absolute;
	left:50%;
	bottom:0;
	margin-left:-7px;
	border:7px solid transparent;
	border-top:0;
	border-bottom:6px solid #e2e2e2;
}
.badge{
	width:27px;
	margin-left:5px;
	border-radius:9px;
	background:#2e86e8;
	font-size:12px;
	line-height:18px;
	text-align:center;
}

/* vehicle + search */
.vehicle{
	display:flex;
	flex:none;
	height:41px;
}
.vehicle-info{
	display:flex;
	align-items:center;
	flex:1;
	gap:8px;
	padding:0 0 3px 9px;
	background:#e2e2e2;
}
.vehicle-info strong{
	font-size:18px;
	font-weight:normal;
}
.search{
	display:flex;
	align-items:center;
	width:338px;
	padding-left:9px;
}
.search input{
	flex:1;
	margin-left:9px;
	font-size:13px;
	outline:0;
}
.search input::placeholder{
	color:#8c8c8c;
}

/* content */
.content{
	display:flex;
	flex:1;
	min-height:0;
}
main{
	display:flex;
	flex-direction:column;
	flex:1;
	min-width:0;
	padding:0 50px 0 9px;
}
.scroll{
	flex:none;
	width:22px;
	padding:4px 4px 0;
	border-left:1px solid #e8e8e8;
	background:#fafafa;
}
.thumb{
	width:12px;
	height:95%;
	border-radius:6px;
	background:#c3c3c3;
}
.title-row{
	display:flex;
	align-items:center;
	flex:none;
	gap:26px;
	height:54px;
	margin-right:-4px;
}
h1{
	flex:1;
	padding-top:6px;
	font:29px/36px Roboto,sans-serif;
	color:#2b2b2b;
}
.crumbs{
	flex:none;
	max-width:1060px;
	margin:2px 0 26px 3px;
	list-style:none;
	line-height:21px;
}
.crumbs li{
	display:inline-block;
	margin-right:2px;
}
.crumbs li+li:before{
	content:">";
	margin-right:8px;
}
.crumbs a{
	color:#0d58b0;
}
h2{
	flex:none;
	padding-left:15px;
	background:#74808e;
	color:#fff;
	font-size:14px;
	font-weight:normal;
	line-height:29px;
}

/* pdf viewer */
.viewer{
	display:flex;
	flex-direction:column;
	flex:1;
	min-height:0;
	margin:10px 1px 0 0;
	background:#282828;
}
.toolbar{
	display:flex;
	align-items:center;
	flex:none;
	height:86px;
	padding:0 31px 0 32px;
	background:#3c3c3c;
	color:#f1f1f1;
	font-family:Inter,sans-serif;
	font-size:21px;
}
.tool{
	display:flex;
	justify-content:center;
	flex:none;
	width:34px;
}
.doc-name{
	width:260px;
	margin:0 35px 0 32px;
	font-weight:500;
	white-space:nowrap;
}
.toolbar input{
	width:77px;
	height:30px;
	background:#1a1a1a;
	color:#fff;
	text-align:center;
}
.toolbar .page-no{
	width:39px;
}
.page-total{
	width:62px;
	padding-left:8px;
}
.page-total i{
	margin-right:12px;
}
.divider{
	width:1px;
	height:30px;
	margin:0 14px;
	background:#757575;
}
.zoom{
	display:flex;
	align-items:center;
	gap:14px;
}
.view{
	display:flex;
	gap:16px;
	margin:0 12px;
}
.ink{
	margin:0 4px;
}
.history{
	display:flex;
	gap:16px;
	margin-left:4px;
}
.actions{
	display:flex;
	gap:22px;
	margin-left:auto;
}
.pages{
	display:flex;
	flex:1;
	min-height:0;
}
.pages .scroll{
	border:0;
	padding-left:6px;
}
.pdf-thumb{
	height:758px;
}
.paper{
	flex:1;
	max-width:1223px;
	margin:5px auto 0;
	padding:43px 83px 0 74px;
	overflow:hidden;
	background:#fff;
	color:#000;
	font-family:"Liberation Sans",Arial,sans-serif;
	font-size:17px;
}
table{
	width:100%;
	border-collapse:collapse;
	table-layout:fixed;
}
td,th{
	border:1px solid #444;
	text-align:left;
	vertical-align:top;
}
.doc-head td{
	padding:0 4px;
	font-size:19px;
	font-weight:bold;
	line-height:26px;
}
.doc-head td:first-child{
	width:232px;
	padding-left:1px;
}
.doc-head td:last-child{
	width:99px;
}
.motor{
	display:flex;
	font-size:19px;
	line-height:24px;
}
.motor b:first-child{
	width:96px;
}
.figure-row{
	display:flex;
	justify-content:space-between;
	margin-top:23px;
}
.legend{
	display:grid;
	grid-template-columns:41px 180px;
	align-content:start;
	row-gap:2px;
	font-style:italic;
	line-height:19px;
}
figure{
	width:699px;
	margin-top:3px;
}
.drawing{
	width:100%;
	border:1px solid #444;
}
.callout{
	font:bold 17px "Liberation Sans",Arial,sans-serif;
}
figcaption{
	margin-top:13px;
	padding-right:2px;
	font-size:12px;
	line-height:18px;
	text-align:right;
}
.steps{
	margin-top:58px;
}
.c1{
	width:193px;
}
.c4{
	width:196px;
}
.steps td,.steps th{
	height:22px;
	padding:0 4px;
	line-height:22px;
	white-space:nowrap;
}
.steps td:first-child{
	padding-left:1px;
}
.steps .sub td:first-child{
	padding-left:4px;
}
.steps a{
	color:#00f;
}
.steps .head th{
	height:29px;
	line-height:26px;
}
.steps .head th:first-child{
	padding-left:3px;
}
.head svg{
	display:inline-block;
	margin:2px 3px 0 0;
	vertical-align:top;
}
.steps tr:nth-child(2) td:nth-child(n+3),.steps .sub td{
	border-top:0;
	border-bottom:0;
}
.steps tr:nth-child(2) td{
	border-top:1px solid #444;
}
.steps .note td{
	height:27px;
	border-top:1px solid #444;
	line-height:26px;
}
.info{
	display:inline-block;
	width:20px;
	height:20px;
	margin:2px 6px 0 1px;
	border:1px solid #000;
	font:bold 18px/18px "Liberation Serif",serif;
	text-align:center;
	vertical-align:top;
}
```
